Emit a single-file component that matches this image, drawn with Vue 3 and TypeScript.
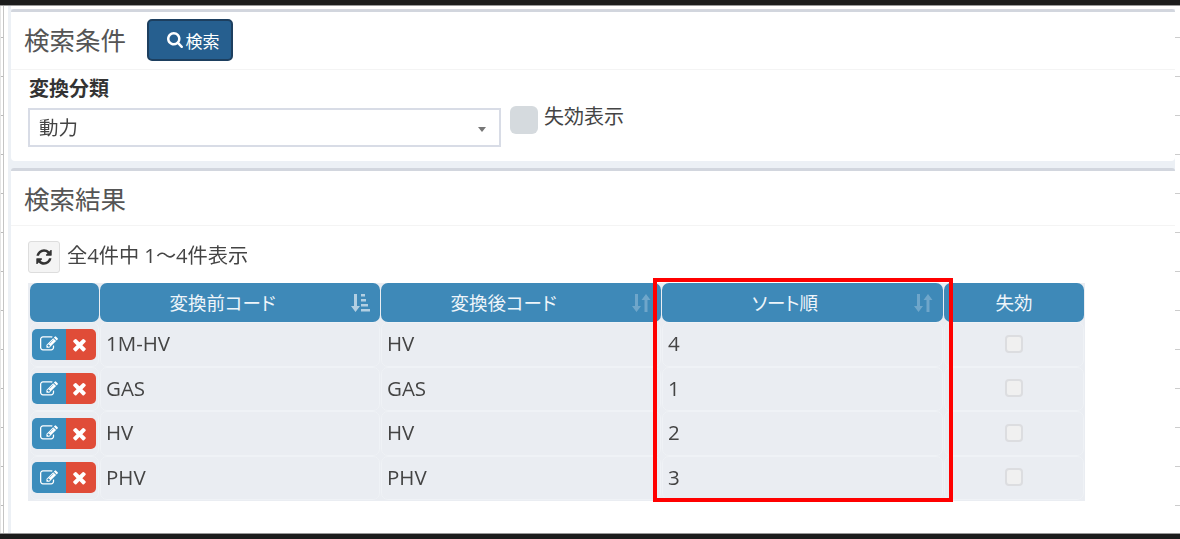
<template>
  <div class="page">
    <div class="edge"></div>
    <main class="main">
      <div class="gutter-left"></div>
      <div class="content">
        <section class="panel">
          <header class="panel-head">
            <h2>検索条件</h2>
            <button class="btn-search" type="button">
              <svg class="ic-search" viewBox="0 0 1664 1664"><path :d="icons.search" /></svg>検索
            </button>
          </header>
          <div class="panel-body filters">
            <div class="field">
              <label>変換分類</label>
              <div class="select">動力<i class="caret"></i></div>
            </div>
            <div class="toggle">
              <span class="toggle-box"></span>
              <span>失効表示</span>
            </div>
          </div>
        </section>

        <section class="panel results">
          <header class="panel-head small">
            <h2>検索結果</h2>
          </header>
          <div class="results-body">
            <div class="toolbar">
              <button class="btn-refresh" type="button">
                <svg viewBox="0 0 1792 1792"><path :d="icons.refresh" /></svg>
              </button>
              <span>全4件中 1～4件表示</span>
            </div>
            <div class="table-wrap">
              <table>
                <colgroup>
                  <col class="c-act" /><col class="c-code" /><col class="c-code" /><col class="c-sort" /><col class="c-off" />
                </colgroup>
                <thead>
                  <tr>
                    <th></th>
                    <th v-for="col in columns" :key="col.label" :class="{ sortable: col.sort }">
                      {{ col.label }}
                      <svg v-if="col.sort === 'asc'" class="sort on" viewBox="0 0 22 20">
                        <path d="M5 1h3v12h3l-4.500 6L2 13h3z" />
                        <path d="M12 1h4v2.500h-4zM12 6h5v2.500h-5zM12 11h7v2.500h-7zM12 16h9v2.500h-9z" />
                      </svg>
                      <svg v-else-if="col.sort === 'none'" class="sort" viewBox="0 0 22 20">
                        <path d="M5 1h3v12h3l-4.500 6L2 13h3z" />
                        <path d="M16 1l4.500 6h-3v12h-3V7h-3z" />
                      </svg>
                    </th>
                  </tr>
                </thead>
                <tbody>
                  <tr v-for="row in rows" :key="row.before">
                    <td class="act">
                      <div class="act-group">
                        <button class="btn-edit" type="button">
                          <svg viewBox="0 0 1792 1792"><path :d="icons.edit" /></svg>
                        </button>
                        <button class="btn-del" type="button">
                          <svg viewBox="0 0 1792 1792"><path :d="icons.times" /></svg>
                        </button>
                      </div>
                    </td>
                    <td class="txt">{{ row.before }}</td>
                    <td class="txt">{{ row.after }}</td>
                    <td class="txt">{{ row.order }}</td>
                    <td class="center"><input type="checkbox" disabled /></td>
                  </tr>
                </tbody>
              </table>
              <div class="highlight"></div>
            </div>
          </div>
        </section>
      </div>
      <div class="gutter-right"></div>
    </main>
    <div class="edge"></div>
  </div>
</template>

<script setup lang="ts">
const icons = {
  search:
    'M1152 704q0-185-131.500-316.500t-316.500-131.500-316.500 131.500-131.500 316.500 131.500 316.500 316.500 131.500 316.500-131.500 131.500-316.500zm512 832q0 52-38 90t-90 38q-54 0-90-38l-343-342q-179 124-399 124-143 0-273.500-55.500t-225-150-150-225-55.500-273.500 55.500-273.500 150-225 225-150 273.500-55.500 273.500 55.500 225 150 150 225 55.500 273.500q0 220-124 399l343 343q37 37 37 90z',
  refresh:
    'M1639 1056q0 5-1 7-64 268-268 434.500t-478 166.500q-146 0-282.500-55t-243.500-157l-129 129q-19 19-45 19t-45-19-19-45v-448q0-26 19-45t45-19h448q26 0 45 19t19 45-19 45l-137 137q71 66 161 102t187 36q134 0 250-65t186-179q11-17 53-117 8-23 30-23h192q13 0 22.500 9.500t9.500 22.500zm25-800v448q0 26-19 45t-45 19h-448q-26 0-45-19t-19-45 19-45l138-138q-148-137-349-137-134 0-250 65t-186 179q-11 17-53 117-8 23-30 23h-199q-13 0-22.500-9.500t-9.500-22.500v-7q65-268 270-434.500t480-166.500q146 0 284 55.500t245 156.500l130-129q19-19 45-19t45 19 19 45z',
  edit:
    'M888 1184l116-116-152-152-116 116v56h96v96h56zm440-720q-16-16-33 1l-350 350q-17 17-1 33t33-1l350-350q17-17 1-33zm80 594v190q0 119-84.500 203.500t-203.500 84.500h-832q-119 0-203.500-84.500t-84.500-203.500v-832q0-119 84.500-203.500t203.500-84.500h832q63 0 117 25 15 7 18 23 3 17-9 29l-49 49q-14 14-32 8-23-6-45-6h-832q-66 0-113 47t-47 113v832q0 66 47 113t113 47h832q66 0 113-47t47-113v-126q0-13 9-22l64-64q15-15 35-7t20 29zm-96-738l288 288-672 672h-288v-288zm444 132l-92 92-288-288 92-92q28-28 68-28t68 28l152 152q28 28 28 68t-28 68z',
  times:
    'M1298 1322q0 40-28 68l-136 136q-28 28-68 28t-68-28l-294-294-294 294q-28 28-68 28t-68-28l-136-136q-28-28-28-68t28-68l294-294-294-294q-28-28-28-68t28-68l136-136q28-28 68-28t68 28l294 294 294-294q28-28 68-28t68 28l136 136q28 28 28 68t-28 68l-294 294 294 294q28 28 28 68z'
}

const columns = [
  { label: '変換前コード', sort: 'asc' },
  { label: '変換後コード', sort: 'none' },
  { label: 'ソート順', sort: 'none' },
  { label: '失効', sort: '' }
]

const rows = [
  { before: '1M-HV', after: 'HV', order: 4 },
  { before: 'GAS', after: 'GAS', order: 1 },
  { before: 'HV', after: 'HV', order: 2 },
  { before: 'PHV', after: 'PHV', order: 3 }
]
</script>

<style>
html,
body {
  margin: 0;
  background: #fff;
}
</style>

<style scoped>
.page {
  width: 1180px;
  height: 539px;
  display: flex;
  flex-direction: column;
  overflow: hidden;
  font-family: "Open Sans", "Noto Sans CJK JP", sans-serif;
  font-size: 20px;
  color: #444;
  filter: blur(0.35px);
}
.edge {
  height: 6px;
  flex: none;
  background: #1c1c1c;
  border-bottom: 1px solid #999;
  box-sizing: border-box;
}
.edge:last-child {
  border-bottom: 0;
  border-top: 1px solid #999;
}
.main {
  flex: 1;
  min-height: 0;
  display: flex;
}
.gutter-left {
  width: 11px;
  flex: none;
  box-sizing: border-box;
  border-left: 1px solid #e4e4e4;
  background:
    linear-gradient(#c4c4c4, #c4c4c4) 2px 0 / 1px 100% no-repeat,
    repeating-linear-gradient(#fff 0 31px, #bbb 31px 32px, #fff 32px 39px) 0 0 / 2px 100% no-repeat,
    linear-gradient(#ecf0f5, #ecf0f5) 7px 0 / 3px 100% no-repeat,
    #fff;
}
.gutter-right {
  width: 5px;
  flex: none;
  background: repeating-linear-gradient(#fff 0 31px, #ccc 31px 32px, #fff 32px 39px);
}
.content {
  flex: 1;
  min-width: 0;
  padding-top: 3px;
  display: flex;
  flex-direction: column;
  gap: 7px;
  background: linear-gradient(#fff 3px, #ecf0f5 3px);
}
.panel {
  background: #fff;
  border-top: 3px solid #d2d6de;
  border-radius: 3px 3px 4px 4px;
}
.results {
  flex: 1;
  border-radius: 3px 3px 0 0;
}
.panel-head {
  height: 58px;
  box-sizing: border-box;
  padding: 7px 13px 0;
  display: flex;
  align-items: flex-start;
  gap: 21px;
  border-bottom: 1px solid #f4f4f4;
}
.panel-head.small {
  height: 55px;
  padding-top: 7px;
}
.panel-head h2 {
  margin: 0;
  font-size: 25.5px;
  line-height: 43px;
  font-weight: 400;
  color: #555;
}
.btn-search {
  width: 86px;
  height: 42px;
  padding: 0 0 0 6px;
  display: flex;
  align-items: center;
  justify-content: center;
  gap: 3px;
  background: #265f8f;
  border: 2px solid #1d3f5f;
  border-radius: 5px;
  color: #fff;
  font: inherit;
  font-size: 17px;
}
.ic-search {
  width: 16px;
  height: 16px;
  fill: #fff;
}
.filters {
  display: flex;
  align-items: flex-start;
  gap: 9px;
  height: 91px;
  box-sizing: border-box;
  padding: 6px 17px 0;
}
.field label {
  display: block;
  height: 32px;
  padding-left: 1px;
  line-height: 26px;
  font-weight: 700;
  color: #333;
  font-size: 20px;
}
.select {
  width: 473px;
  height: 39px;
  box-sizing: border-box;
  padding-left: 9px;
  border: 2px solid #d8dce6;
  line-height: 35px;
  position: relative;
  font-size: 19.5px;
}
.caret {
  position: absolute;
  right: 13px;
  top: 17px;
  border: 4px solid transparent;
  border-top: 5px solid #777;
  border-bottom: 0;
}
.toggle {
  display: flex;
  gap: 6px;
  margin-top: 30px;
  font-size: 20px;
  line-height: 22px;
}
.toggle-box {
  width: 28px;
  height: 28px;
  background: #d5dade;
  border-radius: 6px;
}
.results-body {
  padding: 15px 0 0 17px;
}
.toolbar {
  display: flex;
  align-items: center;
  gap: 7px;
  height: 32px;
  margin-bottom: 10px;
  font-size: 20.2px;
}
.toolbar span {
  margin-top: -5px;
}
.btn-refresh {
  width: 32px;
  height: 32px;
  padding: 0;
  display: flex;
  align-items: center;
  justify-content: center;
  background: #f4f4f4;
  border: 1px solid #ddd;
  border-radius: 3px;
}
.btn-refresh svg {
  width: 18px;
  height: 18px;
  fill: #333;
}
.table-wrap {
  position: relative;
  width: 1057px;
}
table {
  width: 1057px;
  table-layout: fixed;
  border-collapse: separate;
  border-spacing: 1px 0;
  padding: 0 0 1px 1px;
  box-sizing: border-box;
  background: #eaedf2;
}
.c-act { width: 69px; }
.c-code { width: 280px; }
.c-sort { width: 281px; }
th {
  height: 39px;
  box-sizing: border-box;
  padding: 0 0 2px;
  position: relative;
  background: #3e89b8;
  border-radius: 7px;
  color: #eef5fa;
  font-size: 18.5px;
  font-weight: 400;
  font-feature-settings: "palt";
}
th.sortable {
  padding-right: 35px;
}
.sort {
  position: absolute;
  right: 9px;
  top: 10px;
  width: 22px;
  height: 20px;
  fill: #fff;
  opacity: 0.25;
}
.sort.on {
  opacity: 0.6;
}
td {
  height: 44.5px;
  box-sizing: border-box;
  padding: 0 5px;
  border: 1px solid #eff2f6;
  border-radius: 7px;
  background: #eaedf2;
  font-size: 20.5px;
  color: #444;
}
td.txt {
  padding-bottom: 2px;
}
td.act {
  padding: 0 1px;
}
td.center {
  text-align: center;
}
.act-group {
  display: flex;
  width: 64px;
  height: 31px;
  border-radius: 5px;
  overflow: hidden;
}
.act-group button {
  height: 31px;
  padding: 0;
  border: 0;
  display: flex;
  align-items: center;
  justify-content: center;
}
.btn-edit {
  width: 34px;
  background: #3c8dbc;
}
.btn-del {
  width: 30px;
  background: #e04c38;
}
.act-group svg {
  fill: #fff;
}
.btn-edit svg {
  width: 18px;
  height: 18px;
}
.btn-del svg {
  width: 19px;
  height: 19px;
  margin-left: 1px;
}
input[type="checkbox"] {
  appearance: none;
  display: block;
  width: 18px;
  height: 18px;
  margin: -1px auto 0;
  box-sizing: border-box;
  background: #f0f0f0;
  border: 2px solid #dcdde0;
  border-radius: 4px;
}
.highlight {
  position: absolute;
  left: 625px;
  top: -5px;
  width: 300px;
  height: 224px;
  box-sizing: border-box;
  border: 4px solid #f00;
  pointer-events: none;
}
</style>
